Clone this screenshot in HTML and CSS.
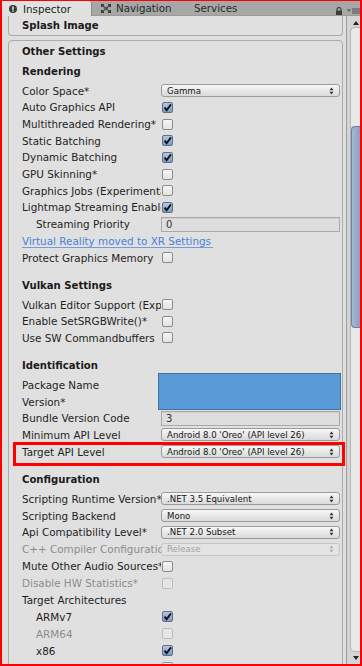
FILE: index.html
```html
<!DOCTYPE html>
<html>
<head>
<meta charset="utf-8">
<link rel="stylesheet" href="styles.css">
</head>
<body>
<div class="window">
  <div class="tabbar">
    <div class="tab tab-active">
      <svg class="tab-icon" width="8" height="8" viewBox="0 0 8 8"><circle cx="4" cy="4" r="4" fill="#3b3b3b"/><rect x="3.3" y="1.5" width="1.4" height="3.2" fill="#fff"/><rect x="3.3" y="5.4" width="1.4" height="1.2" fill="#fff"/></svg>
      <span>Inspector</span>
    </div>
    <div class="tab tab-nav">
      <svg class="tab-icon" width="10" height="9" viewBox="0 0 10 9"><rect x="0" y="0" width="3" height="3" fill="#3a3a3a"/><rect x="7" y="0" width="3" height="3" fill="#3a3a3a"/><rect x="0" y="6" width="3" height="3" fill="#3a3a3a"/><rect x="7" y="6" width="3" height="3" fill="#3a3a3a"/><rect x="3.5" y="3" width="3" height="3" fill="#3a3a3a"/><path d="M1.5 1.5 L8.5 7.5 M8.5 1.5 L1.5 7.5" stroke="#555" stroke-width="1.2"/></svg>
      <span>Navigation</span>
    </div>
    <div class="tab tab-services"><span>Services</span></div>
    <div class="tab-tools">
      <svg width="8" height="8" viewBox="0 0 8 8"><path d="M2 3.5 V2.5 A2 2 0 0 1 6 2.5 V3.5" fill="none" stroke="#3d3d3d" stroke-width="1.2"/><rect x="1" y="3.5" width="6" height="4.5" fill="#3d3d3d"/></svg>
      <svg width="13" height="6" viewBox="0 0 13 6"><path d="M0 1.5 H4 L2 3.5 Z" fill="#444"/><rect x="5" y="0.5" width="8" height="1" fill="#555"/><rect x="5" y="2.5" width="8" height="1" fill="#555"/><rect x="5" y="4.5" width="8" height="1" fill="#555"/></svg>
    </div>
  </div>

  <div class="body">
    <div class="content">
      <div class="foldout foldout-splash">
        <div class="foldout-title">Splash Image</div>
      </div>

      <div class="foldout foldout-other">
        <div class="foldout-title">Other Settings</div>

        <section class="group group-first">
          <h3 class="group-title">Rendering</h3>
          <div class="row"><span class="label">Color Space*</span><div class="popup"><span>Gamma</span><svg class="arr" width="5" height="8" viewBox="0 0 5 8"><path d="M0.5 3.3 L2.5 0.6 L4.5 3.3Z M0.5 4.7 L2.5 7.4 L4.5 4.7Z" fill="#333"/></svg></div></div>
          <div class="row"><span class="label">Auto Graphics API</span><span class="cb cb-on"><svg width="11" height="11" viewBox="0 0 11 11"><path d="M2.6 5.6 L4.6 8.2 L9 2.4" fill="none" stroke="#111" stroke-width="1.9"/></svg></span></div>
          <div class="row"><span class="label">Multithreaded Rendering*</span><span class="cb"></span></div>
          <div class="row"><span class="label">Static Batching</span><span class="cb cb-on"><svg width="11" height="11" viewBox="0 0 11 11"><path d="M2.6 5.6 L4.6 8.2 L9 2.4" fill="none" stroke="#111" stroke-width="1.9"/></svg></span></div>
          <div class="row"><span class="label">Dynamic Batching</span><span class="cb cb-on"><svg width="11" height="11" viewBox="0 0 11 11"><path d="M2.6 5.6 L4.6 8.2 L9 2.4" fill="none" stroke="#111" stroke-width="1.9"/></svg></span></div>
          <div class="row"><span class="label">GPU Skinning*</span><span class="cb"></span></div>
          <div class="row"><span class="label">Graphics Jobs (Experimental)*</span><span class="cb"></span></div>
          <div class="row"><span class="label">Lightmap Streaming Enabled</span><span class="cb cb-on"><svg width="11" height="11" viewBox="0 0 11 11"><path d="M2.6 5.6 L4.6 8.2 L9 2.4" fill="none" stroke="#111" stroke-width="1.9"/></svg></span></div>
          <div class="row"><span class="label indent">Streaming Priority</span><div class="field field-dim">0</div></div>
          <div class="row"><span class="link">Virtual Reality moved to XR Settings</span></div>
          <div class="row"><span class="label">Protect Graphics Memory</span><span class="cb"></span></div>
        </section>

        <section class="group">
          <h3 class="group-title">Vulkan Settings</h3>
          <div class="row"><span class="label">Vulkan Editor Support (Experimental)</span><span class="cb"></span></div>
          <div class="row"><span class="label">Enable SetSRGBWrite()*</span><span class="cb"></span></div>
          <div class="row"><span class="label">Use SW Commandbuffers</span><span class="cb"></span></div>
        </section>

        <section class="group">
          <h3 class="group-title">Identification</h3>
          <div class="redact-rows">
            <span class="label">Package Name</span>
            <div class="redacted"></div>
            <span class="label">Version*</span>
          </div>
          <div class="row"><span class="label">Bundle Version Code</span><div class="field">3</div></div>
          <div class="row"><span class="label">Minimum API Level</span><div class="popup"><span>Android 8.0 'Oreo' (API level 26)</span><svg class="arr" width="5" height="8" viewBox="0 0 5 8"><path d="M0.5 3.3 L2.5 0.6 L4.5 3.3Z M0.5 4.7 L2.5 7.4 L4.5 4.7Z" fill="#333"/></svg></div></div>
          <div class="row row-highlight"><span class="label">Target API Level</span><div class="popup"><span>Android 8.0 'Oreo' (API level 26)</span><svg class="arr" width="5" height="8" viewBox="0 0 5 8"><path d="M0.5 3.3 L2.5 0.6 L4.5 3.3Z M0.5 4.7 L2.5 7.4 L4.5 4.7Z" fill="#333"/></svg></div></div>
        </section>

        <section class="group group-config">
          <h3 class="group-title">Configuration</h3>
          <div class="row"><span class="label">Scripting Runtime Version*</span><div class="popup"><span>.NET 3.5 Equivalent</span><svg class="arr" width="5" height="8" viewBox="0 0 5 8"><path d="M0.5 3.3 L2.5 0.6 L4.5 3.3Z M0.5 4.7 L2.5 7.4 L4.5 4.7Z" fill="#333"/></svg></div></div>
          <div class="row"><span class="label">Scripting Backend</span><div class="popup"><span>Mono</span><svg class="arr" width="5" height="8" viewBox="0 0 5 8"><path d="M0.5 3.3 L2.5 0.6 L4.5 3.3Z M0.5 4.7 L2.5 7.4 L4.5 4.7Z" fill="#333"/></svg></div></div>
          <div class="row"><span class="label">Api Compatibility Level*</span><div class="popup"><span>.NET 2.0 Subset</span><svg class="arr" width="5" height="8" viewBox="0 0 5 8"><path d="M0.5 3.3 L2.5 0.6 L4.5 3.3Z M0.5 4.7 L2.5 7.4 L4.5 4.7Z" fill="#333"/></svg></div></div>
          <div class="row"><span class="label label-off">C++ Compiler Configuration</span><div class="popup popup-off"><span>Release</span><svg class="arr" width="5" height="8" viewBox="0 0 5 8"><path d="M0.5 3.3 L2.5 0.6 L4.5 3.3Z M0.5 4.7 L2.5 7.4 L4.5 4.7Z" fill="#aaa"/></svg></div></div>
          <div class="row"><span class="label">Mute Other Audio Sources*</span><span class="cb"></span></div>
          <div class="row"><span class="label label-off">Disable HW Statistics*</span><span class="cb cb-off"></span></div>
          <div class="row"><span class="label">Target Architectures</span></div>
          <div class="row"><span class="label indent">ARMv7</span><span class="cb cb-on"><svg width="11" height="11" viewBox="0 0 11 11"><path d="M2.6 5.6 L4.6 8.2 L9 2.4" fill="none" stroke="#111" stroke-width="1.9"/></svg></span></div>
          <div class="row"><span class="label indent label-off">ARM64</span><span class="cb cb-off"></span></div>
          <div class="row"><span class="label indent">x86</span><span class="cb cb-on"><svg width="11" height="11" viewBox="0 0 11 11"><path d="M2.6 5.6 L4.6 8.2 L9 2.4" fill="none" stroke="#111" stroke-width="1.9"/></svg></span></div>
          <div class="row"><span class="label">Split APKs by target architecture</span><span class="cb"></span></div>
        </section>
      </div>
    </div>

    <div class="scrollbar">
      <div class="sb-up"><svg width="6" height="4" viewBox="0 0 6 4"><path d="M0 4 L3 0 L6 4Z" fill="#222"/></svg></div>
      <div class="sb-track"><div class="sb-thumb"></div></div>
      <div class="sb-down"><svg width="6" height="4" viewBox="0 0 6 4"><path d="M0 0 L3 4 L6 0Z" fill="#222"/></svg></div>
    </div>
  </div>
</div>
</body>
</html>
```

FILE: styles.css
```css
* { box-sizing: border-box; }
html, body { margin: 0; padding: 0; }
body {
  font-family: "DejaVu Sans", Verdana, sans-serif;
  font-size: 10.4px;
  color: #1e1e1e;
  background: #dfdfdf;
}
.window {
  width: 362px;
  height: 666px;
  border-style: solid;
  border-color: #ff0000;
  border-width: 1px 2px 2px 2px;
  display: flex;
  flex-direction: column;
  overflow: hidden;
  background: #dfdfdf;
}

/* tab bar */
.tabbar {
  height: 15px;
  flex: 0 0 15px;
  display: flex;
  align-items: stretch;
  background: #a7a7a7;
  font-size: 10.3px;
  color: #222;
  border-bottom: 1px solid #9a9a9a;
}
.tab {
  display: flex;
  align-items: center;
  white-space: nowrap;
}
.tab-active {
  width: 90px;
  padding-left: 7px;
  gap: 6px;
  background: #e1e1e1;
  border-right: 1px solid #8c8c8c;
  border-radius: 0 3px 0 0;
  margin-bottom: -1px;
}
.tab-nav {
  width: 88px;
  padding-left: 9px;
  gap: 5px;
  color: #262626;
}
.tab-services {
  padding-left: 14px;
  color: #2a2a2a;
}
.tab-tools {
  margin-left: auto;
  display: flex;
  align-items: center;
  gap: 4px;
  padding-top: 6px;
}

/* body */
.body {
  flex: 1;
  display: flex;
  min-height: 0;
}
.content {
  flex: 1;
  overflow: hidden;
}
.foldout {
  margin: 0 3px 0 6px;
  background: #e0e0e0;
  border: 1px solid #ababab;
}
.foldout-splash {
  height: 20px;
  border-top: none;
  border-radius: 0 0 4px 4px;
}
.foldout-splash .foldout-title { height: 19px; line-height: 19px; }
.foldout-other {
  margin-top: 4px;
  border-radius: 4px 4px 0 0;
}
.foldout-title {
  font-weight: bold;
  font-size: 10.1px;
  padding-left: 13px;
  height: 20px;
  line-height: 21px;
  color: #1a1a1a;
}
.group-title {
  margin: 0;
  font-size: 10.1px;
  font-weight: bold;
  color: #1a1a1a;
  height: 21.3px;
  line-height: 21px;
  padding-left: 13px;
}
.group { margin-top: 9px; }
.group-first { margin-top: 0; }

.row {
  display: grid;
  grid-template-columns: 139px 1fr;
  align-items: center;
  height: 16.7px;
  padding: 0 2px 0 13px;
}
.group-config .row { height: 16.9px; }
.label {
  overflow: hidden;
  white-space: nowrap;
}
.label.indent { padding-left: 14px; }
.label-off { color: #8d8d8d; }

.link {
  grid-column: 1 / 3;
  justify-self: start;
  color: #4c82d6;
  white-space: nowrap;
  border-bottom: 1px solid #6f9de0;
  padding-right: 2px;
  line-height: 12px;
  margin-top: 1px;
}

/* checkbox */
.cb {
  width: 11px;
  height: 11px;
  margin-left: 1px;
  border: 1px solid #8b8b8b;
  border-radius: 2px;
  background: linear-gradient(#f6f6f6, #e2e2e2);
  display: block;
  position: relative;
}
.cb svg { position: absolute; left: -1px; top: -1px; }
.cb-on {
  background: linear-gradient(#b6c7e2, #7f9ac4);
  border-color: #5e6f8c;
}
.cb-off {
  border-color: #bdbdbd;
  background: #e6e6e6;
}

/* popup */
.popup {
  height: 13px;
  border: 1px solid #9a9a9a;
  border-radius: 3px;
  background: linear-gradient(#f7f7f7, #dadada);
  display: flex;
  align-items: center;
  justify-content: space-between;
  padding: 0 5px 0 5px;
  font-size: 8.6px;
  color: #151515;
  white-space: nowrap;
  overflow: hidden;
}
.popup span { line-height: 11px; padding-top: 1px; }
.arr { flex: 0 0 auto; }
.popup-off {
  border-color: #c6c6c6;
  background: #e4e4e4;
  color: #a2a2a2;
}

/* text field */
.field {
  height: 15px;
  border: 1px solid #a9a9a9;
  background: #dedede;
  box-shadow: inset 0 1px 0 #cfcfcf;
  padding-left: 4px;
  line-height: 13px;
  font-size: 10px;
  color: #333;
}

/* redacted block */
.redact-rows {
  display: grid;
  grid-template-columns: 139px 1fr;
  grid-auto-rows: 16.7px;
  align-items: center;
  padding: 0 2px 0 13px;
}
.redacted {
  grid-column: 2;
  grid-row: 1 / 3;
  align-self: stretch;
  margin: -3.7px -1px 0 -3px;
  background: #5a9ad6;
  border: 1px solid #41739f;
}
.redact-rows .label:nth-child(1) { grid-row: 1; grid-column: 1; }
.redact-rows .label:nth-child(3) { grid-row: 2; grid-column: 1; }

/* annotation highlight */
.row-highlight { position: relative; }
.row-highlight::after {
  content: "";
  position: absolute;
  left: 4px;
  right: -2.5px;
  top: -1.4px;
  bottom: -6.4px;
  border: 3px solid #ff0000;
}

/* scrollbar */
.scrollbar {
  width: 14px;
  flex: 0 0 14px;
  border-left: 1px solid #9d9d9d;
  background: #d4d4d4;
  display: flex;
  flex-direction: column;
  padding-left: 3px;
}
.sb-up {
  height: 9px;
  display: flex;
  align-items: flex-end;
  justify-content: center;
  padding-left: 1px;
}
.sb-track {
  flex: 1;
  margin-top: 2px;
  border: 1px solid #b3b3b3;
  border-right: none;
  border-radius: 5px 0 0 5px;
  background: #e9e9e9;
  padding-top: 98px;
}
.sb-thumb {
  height: 202px;
  border: 1px solid #6d809e;
  border-right: none;
  border-radius: 4px 0 0 4px;
  background: linear-gradient(90deg, #a7b8d2, #8a9fc1);
}
.sb-down {
  height: 12px;
  display: flex;
  align-items: center;
  justify-content: center;
  padding-left: 1px;
}
```
